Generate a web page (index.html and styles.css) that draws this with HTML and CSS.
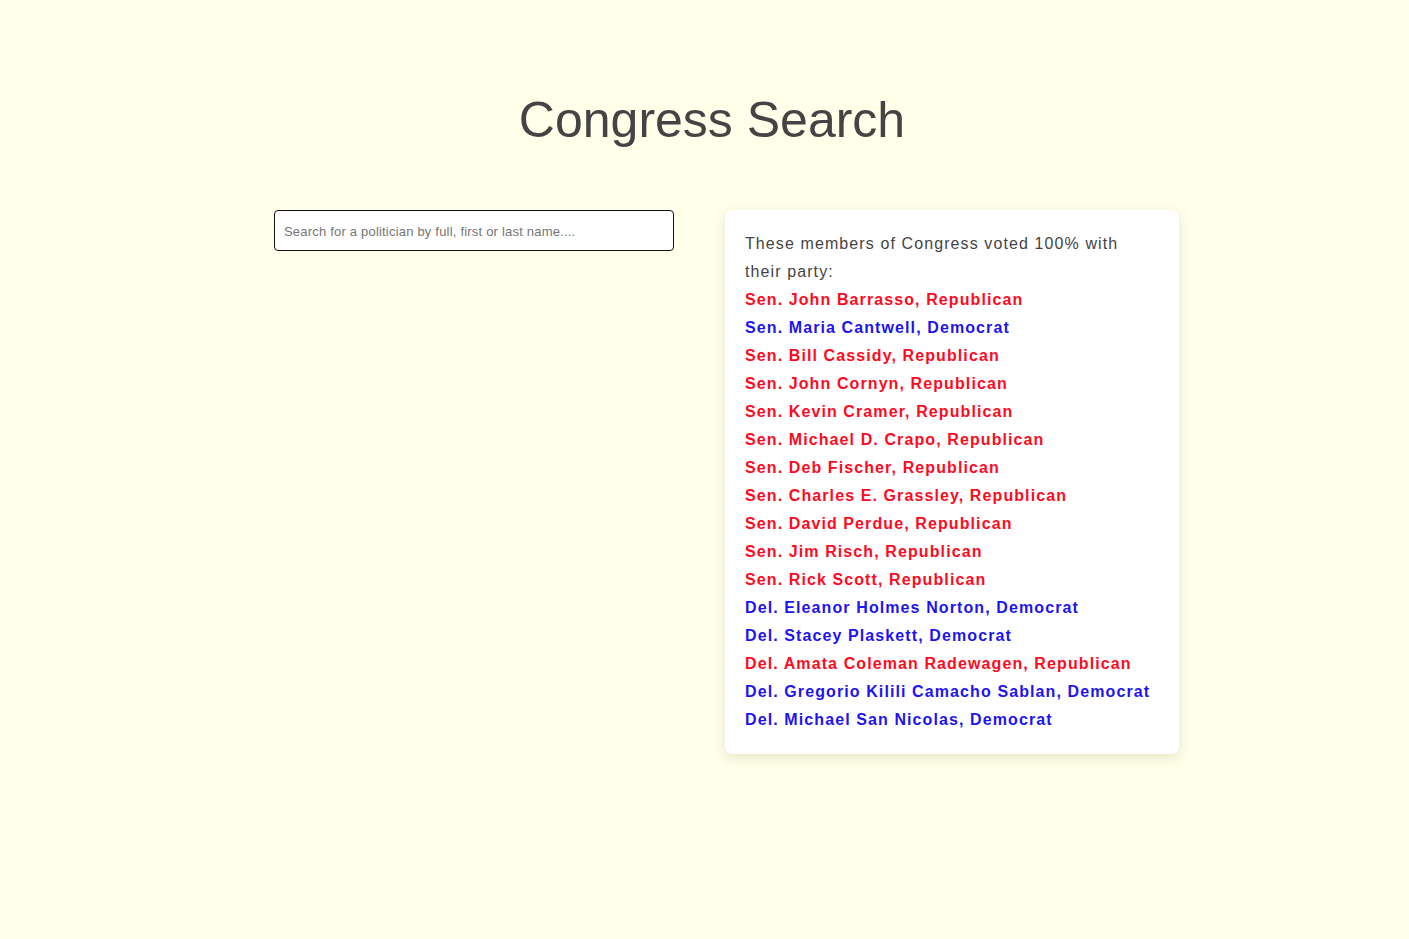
FILE: index.html
```html
<!DOCTYPE html>
<html lang="en">
<head>
<meta charset="utf-8">
<title>Congress Search</title>
<link rel="stylesheet" href="styles.css">
</head>
<body>
<h1 class="title">Congress Search</h1>
<div class="main">
  <div class="search-col">
    <input class="search" type="text" placeholder="Search for a politician by full, first or last name....">
  </div>
  <div class="card">
    <p class="intro">These members of Congress voted 100% with their party:</p>
    <ul class="list">
      <li class="rep">Sen. John Barrasso, Republican</li>
      <li class="dem">Sen. Maria Cantwell, Democrat</li>
      <li class="rep">Sen. Bill Cassidy, Republican</li>
      <li class="rep">Sen. John Cornyn, Republican</li>
      <li class="rep">Sen. Kevin Cramer, Republican</li>
      <li class="rep">Sen. Michael D. Crapo, Republican</li>
      <li class="rep">Sen. Deb Fischer, Republican</li>
      <li class="rep">Sen. Charles E. Grassley, Republican</li>
      <li class="rep">Sen. David Perdue, Republican</li>
      <li class="rep">Sen. Jim Risch, Republican</li>
      <li class="rep">Sen. Rick Scott, Republican</li>
      <li class="dem">Del. Eleanor Holmes Norton, Democrat</li>
      <li class="dem">Del. Stacey Plaskett, Democrat</li>
      <li class="rep">Del. Amata Coleman Radewagen, Republican</li>
      <li class="dem">Del. Gregorio Kilili Camacho Sablan, Democrat</li>
      <li class="dem">Del. Michael San Nicolas, Democrat</li>
    </ul>
  </div>
</div>
</body>
</html>
```
FILE: styles.css
```css
html, body {
  margin: 0;
  padding: 0;
  background: #ffffea;
  font-family: "Liberation Sans", Arial, sans-serif;
  color: #444;
}
body {
  min-height: 939px;
}
.title {
  margin: 0;
  padding-top: 90px;
  padding-left: 15px;
  font-size: 50px;
  font-weight: 400;
  line-height: 60px;
  text-align: center;
  color: #444;
}
.main {
  display: flex;
  justify-content: center;
  align-items: flex-start;
  gap: 51px;
  margin-top: 60px;
  padding-left: 44px;
}
.search-col {
  width: 400px;
}
.search {
  box-sizing: border-box;
  width: 400px;
  height: 41px;
  border: 1px solid #111;
  border-radius: 4px;
  padding: 2px 9px 0;
  font-family: "Liberation Sans", Arial, sans-serif;
  font-size: 13px;
  letter-spacing: 0.2px;
  background: #fff;
  color: #333;
  outline: none;
}
.search::placeholder {
  color: #757575;
}
.card {
  box-sizing: border-box;
  width: 454px;
  background: #fff;
  border-radius: 7px;
  padding: 20px 20px 20px;
  box-shadow: 0 4px 12px rgba(120, 120, 60, 0.18);
}
.intro {
  margin: 0;
  font-size: 16px;
  line-height: 28px;
  letter-spacing: 1.1px;
  color: #444;
}
.list {
  list-style: none;
  margin: 0;
  padding: 0;
}
.list li {
  font-size: 16px;
  line-height: 28px;
  font-weight: 700;
  letter-spacing: 1.1px;
}
.rep {
  color: #ff0a1e;
}
.dem {
  color: #1e14f0;
}
```
